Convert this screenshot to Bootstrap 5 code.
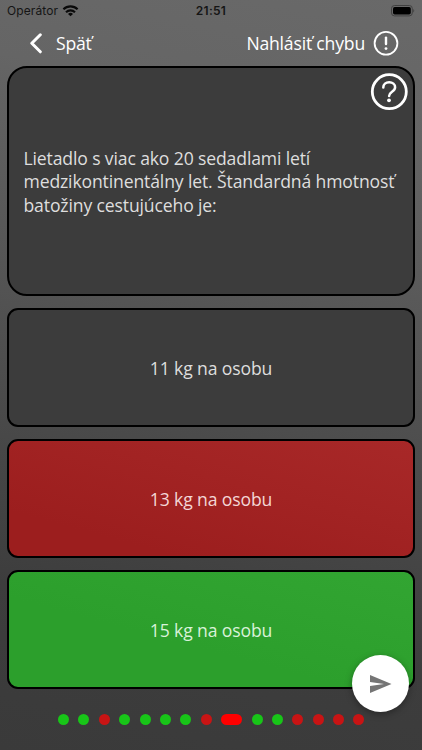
<!DOCTYPE html>
<html lang="sk">
<head>
<meta charset="utf-8">
<meta name="viewport" content="width=device-width, initial-scale=1">
<title>Test</title>
<link href="https://cdn.jsdelivr.net/npm/bootstrap@5.3.0/dist/css/bootstrap.min.css" rel="stylesheet">
<style>
body{font-family:"Open Sans",sans-serif;background:#3c3c3c;overflow:hidden}
.screen{width:422px;height:750px;background:linear-gradient(192deg,#696969 0,#656565 17%,#535353 45%,#3d3d3d 80%,#3a3a3a 100%)}
.status{height:22px;padding:0 7px;font-family:Inter,sans-serif;font-size:12px;color:#151515}
.status>*{flex:1 1 0}
.carrier{letter-spacing:.1px}
.clock{font-weight:600;font-size:12px;letter-spacing:.3px}
.topbar{height:43.5px;padding:0 23px 0 29px;font-size:17.6px;letter-spacing:-.19px;line-height:24px}
.topbar span{padding-bottom:2px}
.tiles{gap:12px;padding:0 7px}
.tile{border:2px solid #000;background:#3c3c3c;color:#dedede;font-size:17.6px;letter-spacing:-.14px;line-height:23.5px}
.question{height:230.5px;border-radius:20px;padding:2px 14px 0 14.5px}
.answer{height:119px;border-radius:11px;padding:2px 0 0}
.wrong{background:linear-gradient(195deg,#a82828,#9c1e1e 80%);color:#f3d6d6}
.right{background:linear-gradient(195deg,#32a532,#2c9f2c 60%);color:#d9f2d9}
.help{top:5px;right:5px;line-height:0}
.dots{gap:9.4px;height:11px;margin:25px 0 0 58px}
.dot{width:11px;height:11px;border-radius:50%;background:#18c518}
.dot.bad{background:#c81414}
.dot.now{width:21px;border-radius:6px;background:#f00}
.send{left:352px;top:655px;width:57px;height:57px;box-shadow:0 2px 7px rgba(0,0,0,.35)}
</style>
</head>
<body>
<div class="screen position-relative overflow-hidden">
  <div class="status d-flex align-items-center">
    <div class="d-flex align-items-center"><span class="carrier">Operátor</span>
      <svg class="ms-1" width="17" height="12" viewBox="0 0 17 12" fill="none" stroke="#0a0a0a" stroke-width="2.1"><path d="M1.4 4.3a10.2 10.2 0 0 1 14.2 0M4 7.2a6.5 6.5 0 0 1 9 0"/><path d="M8.5 11.3L6 8.9a3.7 3.7 0 0 1 5 0z" fill="#0a0a0a" stroke="none"/></svg>
    </div>
    <div class="clock text-center">21:51</div>
    <div class="d-flex justify-content-end">
      <svg width="25" height="12" viewBox="0 0 25 12"><rect x="1.5" y=".5" width="20.8" height="10.4" rx="3" fill="none" stroke="#414141"/><rect x="3" y="2" width="17.8" height="7.4" rx="1.7"/><path d="M23.3 4c1.3.5 1.3 3 0 3.5z" fill="#414141"/></svg>
    </div>
  </div>
  <div class="topbar d-flex align-items-center justify-content-between text-white">
    <div class="d-flex align-items-center">
      <svg width="15" height="22" viewBox="0 0 15 22" fill="none" stroke="#fff" stroke-width="3" stroke-linecap="round" stroke-linejoin="round"><path d="M11.3 1.8L2.8 10.3l8.5 8.5"/></svg>
      <span class="ms-2 ps-1">Späť</span>
    </div>
    <div class="d-flex align-items-center">
      <span class="me-2">Nahlásiť chybu</span>
      <svg width="26" height="26" viewBox="0 0 26 26" fill="none" stroke="#fff"><circle cx="13" cy="12.3" r="11.4" stroke-width="1.8"/><path d="M13 6.6v6.4" stroke-width="2.4" stroke-linecap="round"/><circle cx="13" cy="17.6" r="1.4" fill="#fff" stroke="none"/></svg>
    </div>
  </div>
  <div class="tiles d-flex flex-column">
    <section class="tile question position-relative d-flex align-items-center">
      <div>Lietadlo s viac ako 20 sedadlami letí<br>medzikontinentálny let. Štandardná hmotnosť<br>batožiny cestujúceho je:</div>
      <div class="help position-absolute"><svg width="38" height="38" viewBox="0 0 38 38" fill="none" stroke="#fff"><circle cx="19.3" cy="18.7" r="17" stroke-width="2.8"/><path d="M13.3 14.6c0-3.2 2.5-5.3 5.9-5.3s5.9 2.1 5.9 5c0 4.6-6 4.4-6 8.7" stroke-width="2.5" stroke-linecap="round"/><circle cx="19" cy="27.3" r="1.9" fill="#fff" stroke="none"/></svg></div>
    </section>
    <button class="tile answer">11 kg na osobu</button>
    <button class="tile answer wrong">13 kg na osobu</button>
    <button class="tile answer right">15 kg na osobu</button>
  </div>
  <div class="dots d-flex">
    <i class="dot"></i><i class="dot"></i><i class="dot bad"></i><i class="dot"></i><i class="dot"></i><i class="dot"></i><i class="dot"></i><i class="dot bad"></i><i class="dot now"></i><i class="dot"></i><i class="dot"></i><i class="dot bad"></i><i class="dot bad"></i><i class="dot bad"></i><i class="dot bad"></i>
  </div>
  <button class="send position-absolute rounded-circle border-0 bg-white p-0 d-flex align-items-center justify-content-center" aria-label="Odoslať">
    <svg width="23" height="20" viewBox="0 0 23 20"><path d="M1 1l21.5 9L1 19v-7l14-2L1 8z" fill="#757575"/></svg>
  </button>
</div>
<script src="https://cdn.jsdelivr.net/npm/bootstrap@5.3.0/dist/js/bootstrap.bundle.min.js"></script>
</body>
</html>
